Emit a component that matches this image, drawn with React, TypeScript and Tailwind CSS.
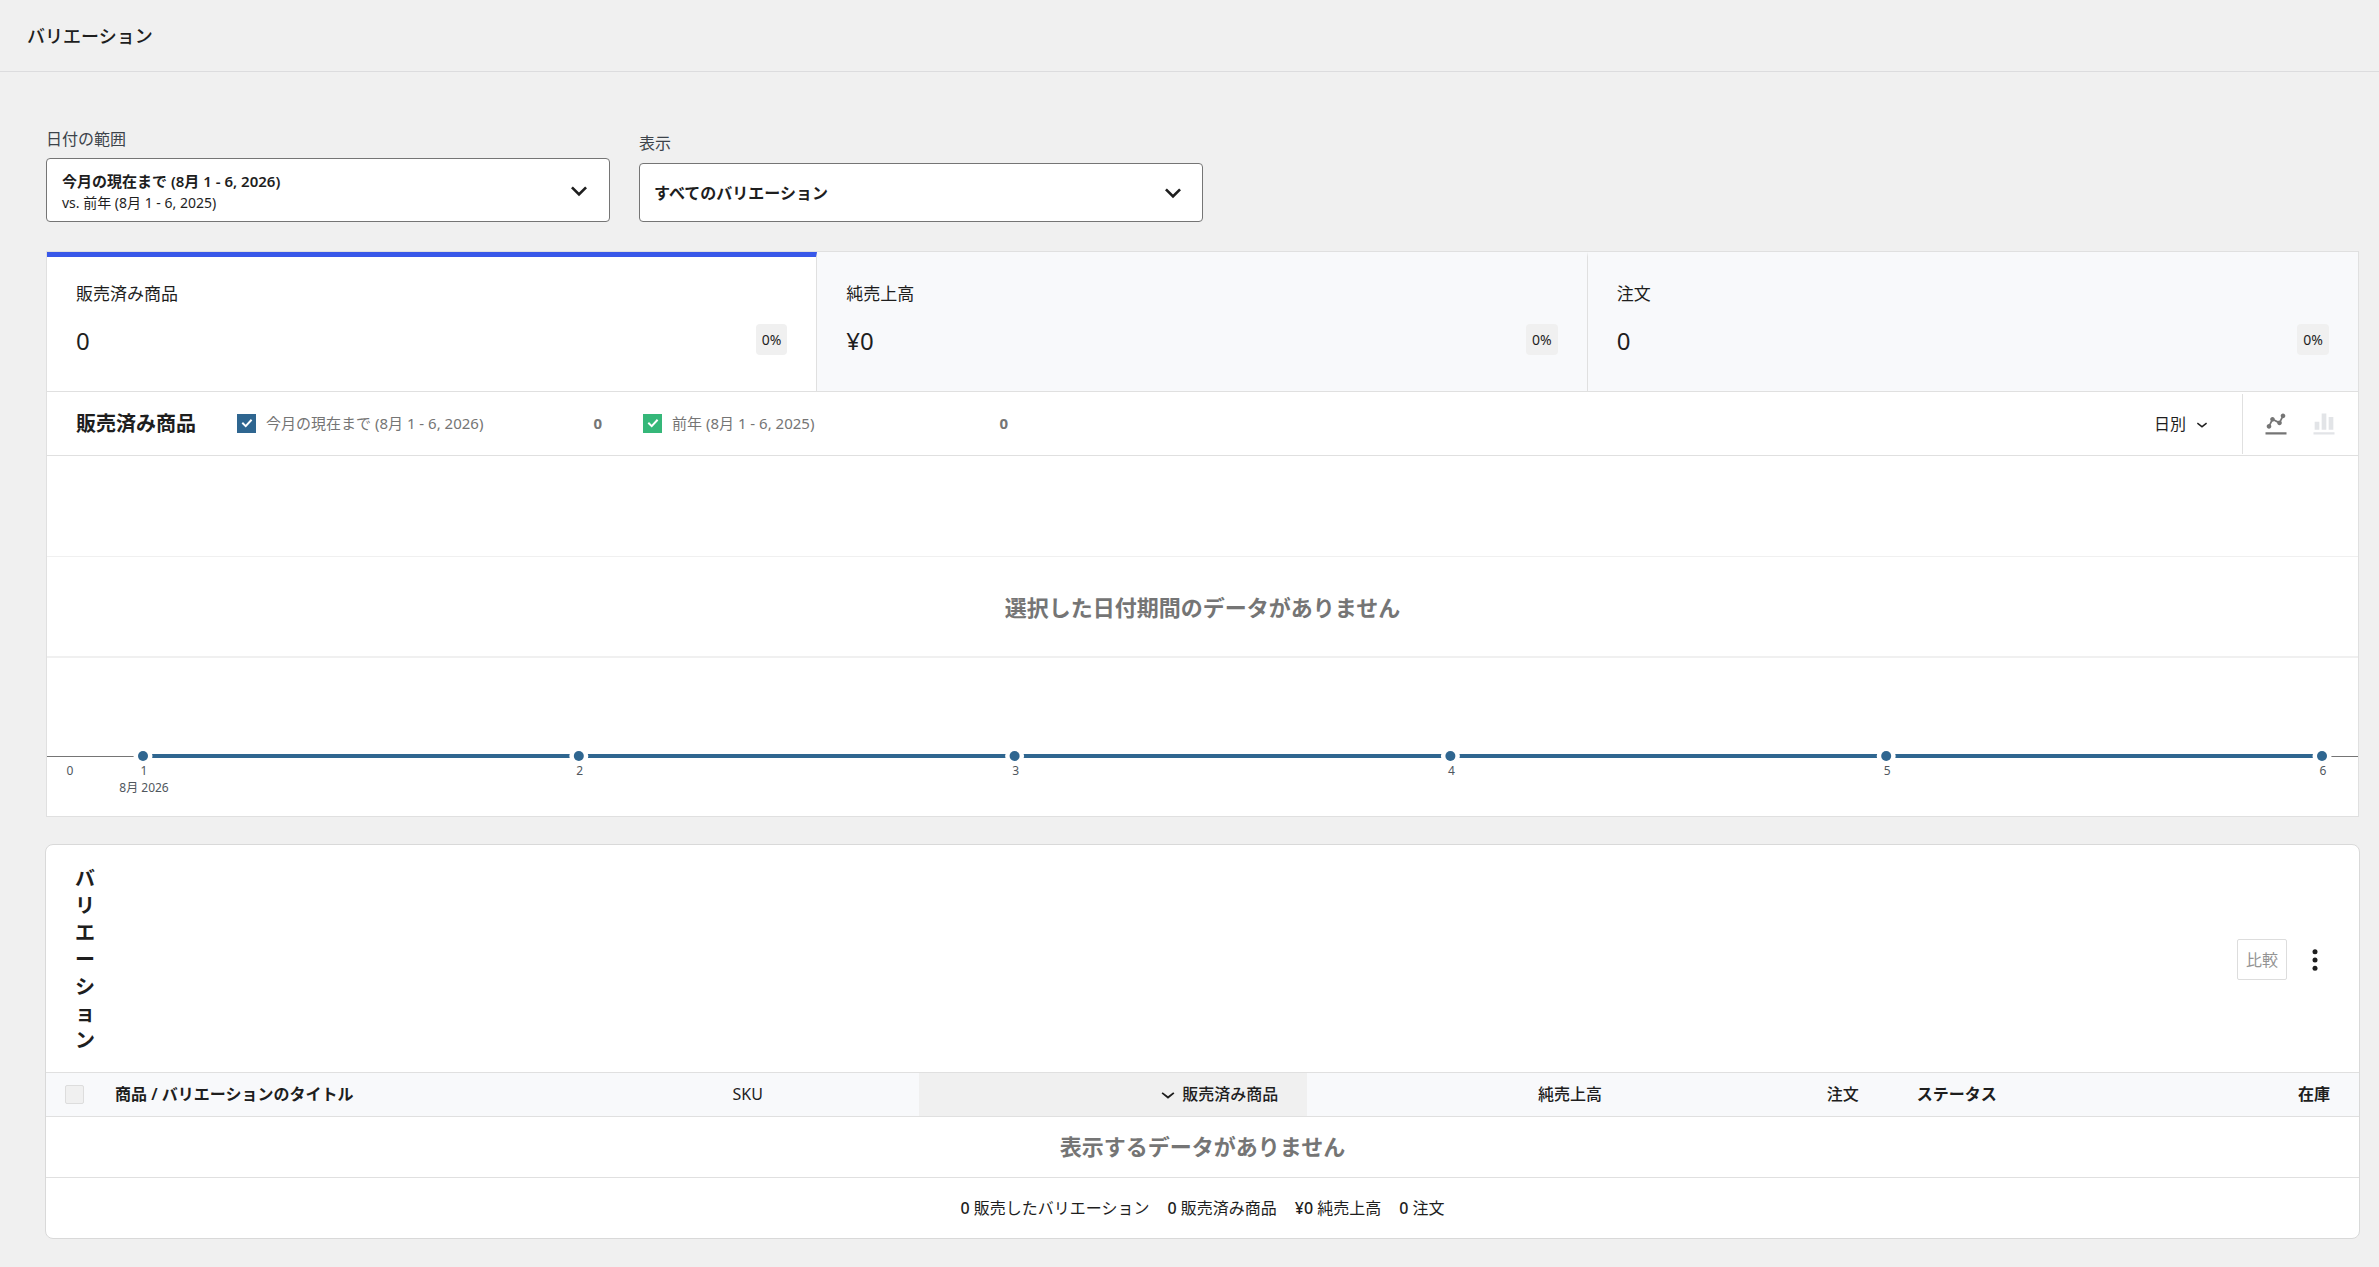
import { ReactNode, useState } from "react";

interface Metric {
  key: string;
  label: string;
  value: string;
  delta: string;
}

interface LegendEntry {
  id: string;
  label: string;
  total: number;
  color: string;
}

const METRICS: Metric[] = [
  { key: "items_sold", label: "販売済み商品", value: "0", delta: "0%" },
  { key: "net_revenue", label: "純売上高", value: "¥0", delta: "0%" },
  { key: "orders_count", label: "注文", value: "0", delta: "0%" },
];

const LEGEND: LegendEntry[] = [
  {
    id: "primary",
    label: "今月の現在まで (8月 1 - 6, 2026)",
    total: 0,
    color: "bg-[#2f6690]",
  },
  {
    id: "secondary",
    label: "前年 (8月 1 - 6, 2025)",
    total: 0,
    color: "bg-[#35b779]",
  },
];

const SUMMARY = [
  { value: "0", label: "販売したバリエーション" },
  { value: "0", label: "販売済み商品" },
  { value: "¥0", label: "純売上高" },
  { value: "0", label: "注文" },
];

const DAYS = [1, 2, 3, 4, 5, 6];

function BoldChevron() {
  return (
    <svg
      viewBox="0 0 24 24"
      className="h-8 w-8 shrink-0 fill-[#1e1e1e]"
      aria-hidden="true"
    >
      <path d="M7.41 8.59 12 13.17l4.59-4.58L18 10l-6 6-6-6z" />
    </svg>
  );
}

function ThinChevron({ className }: Readonly<{ className: string }>) {
  return (
    <svg viewBox="0 0 24 24" className={className} aria-hidden="true">
      <path d="M17.5 11.6 12 16l-5.5-4.4.9-1.2L12 14l4.5-3.6 1 1.2z" />
    </svg>
  );
}

function Filters() {
  return (
    <div className="flex items-end gap-[29px]">
      <div className="w-[564px]">
        <span
          id="range-label"
          className="mb-[7px] block leading-6 text-[#3c434a]"
        >
          日付の範囲
        </span>
        <button
          type="button"
          aria-haspopup="dialog"
          aria-labelledby="range-label range-value"
          className="flex h-16 w-full items-center justify-between rounded border border-[#757575] bg-white pt-[2px] pr-[14px] pl-[15px] text-left"
        >
          <span id="range-value">
            <span className="block text-[15px] leading-6 font-semibold">
              今月の現在まで (8月 1 - 6, 2026)
            </span>
            <span className="block text-sm">vs. 前年 (8月 1 - 6, 2025)</span>
          </span>
          <BoldChevron />
        </button>
      </div>

      <div className="w-[564px]">
        <label
          htmlFor="show"
          className="mb-2 block leading-6 text-[#3c434a]"
        >
          表示
        </label>
        <div className="relative">
          <select
            id="show"
            className="block h-[59px] w-full appearance-none rounded border border-[#757575] bg-white pr-12 pl-[14px] font-semibold"
          >
            <option>すべてのバリエーション</option>
          </select>
          <span className="pointer-events-none absolute inset-y-0 right-[14px] flex items-center">
            <BoldChevron />
          </span>
        </div>
      </div>
    </div>
  );
}

function MetricTiles({
  selected,
  onSelect,
}: Readonly<{ selected: string; onSelect: (key: string) => void }>) {
  return (
    <div className="grid grid-cols-3 border-b border-[#e0e0e0]">
      {METRICS.map((metric) => {
        const active = metric.key === selected;
        return (
          <button
            key={metric.key}
            type="button"
            aria-pressed={active}
            onClick={() => onSelect(metric.key)}
            className={`border-t-[5px] border-r border-r-[#e0e0e0] px-[29px] pt-[25px] pb-9 text-left last:border-r-0 ${
              active
                ? "border-t-[#3858e9] bg-white"
                : "border-t-[#f8f9fb] bg-[#f8f9fb]"
            }`}
          >
            <span className="block text-[17px] leading-6">{metric.label}</span>
            <span className="mt-[18px] flex items-end justify-between">
              <span className="text-2xl leading-[29px]">{metric.value}</span>
              <span className="rounded-sm bg-[#f0f0f0] px-[6px] text-sm leading-[31px]">
                {metric.delta}
              </span>
            </span>
          </button>
        );
      })}
    </div>
  );
}

function LegendItem({ entry }: Readonly<{ entry: LegendEntry }>) {
  const [checked, setChecked] = useState(true);

  return (
    <label className="flex w-[365px] items-center text-[15px] text-[#757575]">
      <span className="relative mr-[10px] h-[19px] w-[19px]">
        <input
          type="checkbox"
          checked={checked}
          onChange={() => setChecked(!checked)}
          className={`block h-full w-full appearance-none ${
            checked ? entry.color : "border border-[#757575] bg-white"
          }`}
        />
        {checked && (
          <svg
            viewBox="0 0 19 19"
            className="pointer-events-none absolute inset-0 fill-none stroke-white stroke-2"
            aria-hidden="true"
          >
            <path d="M5.3 8.8 8.7 12.1 14.6 5.8" />
          </svg>
        )}
      </span>
      <span>{entry.label}</span>
      <span className="ml-auto font-bold">{entry.total}</span>
    </label>
  );
}

function ChartTypeButton({
  label,
  active,
  onClick,
  children,
}: Readonly<{
  label: string;
  active: boolean;
  onClick: () => void;
  children: ReactNode;
}>) {
  return (
    <button
      type="button"
      aria-label={label}
      aria-pressed={active}
      onClick={onClick}
    >
      <svg
        viewBox="0 0 24 24"
        className={`h-7 w-7 ${active ? "fill-[#757575]" : "fill-[#e2e4e7]"}`}
      >
        {children}
      </svg>
    </button>
  );
}

function ChartToolbar({ title }: Readonly<{ title: string }>) {
  const [type, setType] = useState("line");

  return (
    <div className="flex h-16 items-center border-b border-[#e0e0e0] pl-[29px]">
      <h2 className="mr-[41px] text-xl font-semibold">{title}</h2>
      <div className="flex gap-[41px]">
        {LEGEND.map((entry) => (
          <LegendItem key={entry.id} entry={entry} />
        ))}
      </div>
      <div className="relative mr-[29px] ml-auto">
        <select
          aria-label="間隔"
          className="block appearance-none bg-white pr-[26px]"
        >
          <option>日別</option>
        </select>
        <ThinChevron className="pointer-events-none absolute top-0 right-0 h-6 w-[22px] fill-[#1e1e1e]" />
      </div>
      <div className="flex h-[60px] items-center gap-5 border-l border-[#e0e0e0] pr-5 pl-[19px]">
        <ChartTypeButton
          label="折れ線グラフ"
          active={type === "line"}
          onClick={() => setType("line")}
        >
          <path d="M3 19h18v2H3zm3-3c1.1 0 2-.9 2-2 0-.5-.2-1-.5-1.3L8.8 10H9c.5 0 1-.2 1.3-.5l2.7 1.4v.1c0 1.1.9 2 2 2s2-.9 2-2c0-.5-.2-.9-.5-1.3L17.8 7h.2c1.1 0 2-.9 2-2s-.9-2-2-2-2 .9-2 2c0 .5.2 1 .5 1.3L15.2 9H15c-.5 0-1 .2-1.3.5L11 8.2V8c0-1.1-.9-2-2-2s-2 .9-2 2c0 .5.2 1 .5 1.3L6.2 12H6c-1.1 0-2 .9-2 2s.9 2 2 2z" />
        </ChartTypeButton>
        <ChartTypeButton
          label="棒グラフ"
          active={type === "bar"}
          onClick={() => setType("bar")}
        >
          <path d="M21 21H3v-2h18v2zM8 10H4v7h4v-7zm6-7h-4v14h4V3zm6 3h-4v11h4V6z" />
        </ChartTypeButton>
      </div>
    </div>
  );
}

function Chart() {
  return (
    <div className="relative overflow-hidden pr-9 pl-24">
      <svg className="block h-[360px] w-full overflow-visible">
        <g className="stroke-[#f0f0f0]">
          <line x1="-10%" x2="110%" y1="100.5" y2="100.5" />
          <line x1="-10%" x2="110%" y1="201" y2="201" strokeWidth="2" />
        </g>
        <line
          x1="-10%"
          x2="110%"
          y1="300.5"
          y2="300.5"
          className="stroke-[#757575]"
        />
        <line
          x1="0%"
          x2="100%"
          y1="300"
          y2="300"
          className="stroke-[#2f6690] stroke-4"
        />
        {DAYS.map((day, index) => (
          <g key={day}>
            <circle cx={`${index * 20}%`} cy="300" r="9.5" fill="#fff" />
            <circle cx={`${index * 20}%`} cy="300" r="5" fill="#2f6690" />
          </g>
        ))}
        <g className="fill-[#50575e] text-xs" textAnchor="middle">
          <text x="-73" y="319">
            0
          </text>
          {DAYS.map((day, index) => (
            <text key={day} x={`${index * 20}%`} dx="1" y="319">
              {day}
            </text>
          ))}
          <text x="1" y="336">
            8月 2026
          </text>
        </g>
      </svg>
      <p className="absolute inset-x-0 top-[135px] text-center text-[22px] leading-8 font-semibold text-[#757575]">
        選択した日付期間のデータがありません
      </p>
    </div>
  );
}

function VariationsTable() {
  return (
    <section className="mx-[-1px] mt-[27px] overflow-hidden rounded-lg border border-[#d9d9d9] bg-white">
      <header className="flex items-center justify-between border-b border-[#e0e0e0] px-[29px] pt-5 pb-[18px]">
        <h2 className="w-5 text-xl leading-[27px] font-semibold break-all">
          バリエーション
        </h2>
        <div className="flex items-center gap-[13px]">
          <button
            type="button"
            disabled
            className="h-[41px] rounded-xs border border-[#ddd] px-2 text-[#949494]"
          >
            比較
          </button>
          <button type="button" aria-label="表示する列を選択">
            <svg viewBox="0 0 30 30" className="h-[30px] w-[30px] fill-[#1e1e1e]">
              <circle cx="15" cy="6.7" r="2.5" />
              <circle cx="15" cy="15" r="2.5" />
              <circle cx="15" cy="23.3" r="2.5" />
            </svg>
          </button>
        </div>
      </header>

      <table className="w-full table-fixed">
        <colgroup>
          <col className="w-10" />
          <col className="w-[26.7%]" />
          <col className="w-[9.3%]" />
          <col className="w-[16.8%]" />
          <col className="w-[14%]" />
          <col className="w-[11.1%]" />
          <col className="w-[12%]" />
          <col />
        </colgroup>
        <thead>
          <tr className="h-[43px] border-b border-[#e0e0e0] bg-[#f8f9fb] text-left">
            <th className="pl-[19px]">
              <input
                type="checkbox"
                disabled
                aria-label="すべて選択"
                className="block h-[19px] w-[19px] appearance-none rounded-xs border border-[#ddd] bg-[#f0f0f0]"
              />
            </th>
            <th className="px-[29px] font-semibold">
              商品 / バリエーションのタイトル
            </th>
            <th className="px-[29px] font-normal">SKU</th>
            <th
              aria-sort="descending"
              className="bg-[#f0f0f0] px-[29px] font-medium"
            >
              <button
                type="button"
                className="flex w-full items-center justify-end"
              >
                <ThinChevron className="h-7 w-7 fill-[#1e1e1e]" />
                販売済み商品
              </button>
            </th>
            <th className="px-[29px] text-right font-medium">
              <button type="button">純売上高</button>
            </th>
            <th className="px-[29px] text-right font-medium">
              <button type="button">注文</button>
            </th>
            <th className="px-[29px] font-semibold">ステータス</th>
            <th className="px-[29px] text-right font-semibold">在庫</th>
          </tr>
        </thead>
        <tbody>
          <tr className="border-b border-[#e0e0e0]">
            <td
              colSpan={8}
              className="h-[61px] text-center text-[22px] font-semibold text-[#757575]"
            >
              表示するデータがありません
            </td>
          </tr>
        </tbody>
      </table>

      <ul className="flex h-[60px] items-center justify-center gap-[18px]">
        {SUMMARY.map((item) => (
          <li key={item.label}>
            <span className="font-medium">{item.value}</span> {item.label}
          </li>
        ))}
      </ul>
    </section>
  );
}

export default function App() {
  const [selected, setSelected] = useState("items_sold");
  const metric = METRICS.find((m) => m.key === selected) ?? METRICS[0];

  return (
    <div
      lang="ja"
      className="min-h-screen bg-[#f0f0f0] font-['Noto_Sans','Noto_Sans_CJK_JP',sans-serif] text-base text-[#1e1e1e]"
    >
      <header className="flex h-[72px] items-center border-b border-[#dcdcde] px-[27px]">
        <h1 className="text-lg font-medium">バリエーション</h1>
      </header>

      <main className="pt-[55px] pr-5 pb-7 pl-[46px]">
        <Filters />
        <section className="mt-[29px] border border-[#e0e0e0] bg-white">
          <MetricTiles selected={selected} onSelect={setSelected} />
          <ChartToolbar title={metric.label} />
          <Chart />
        </section>
        <VariationsTable />
      </main>
    </div>
  );
}
